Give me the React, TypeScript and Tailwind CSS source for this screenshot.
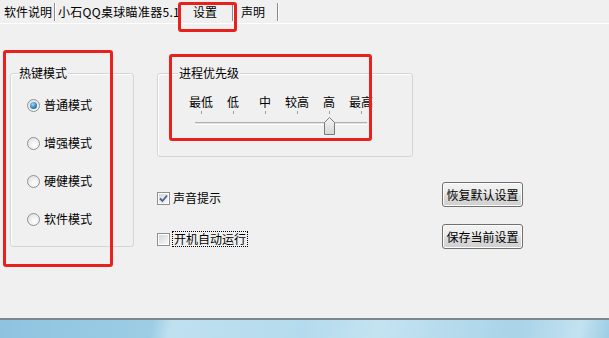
const FONT = "font-['Noto_Sans_CJK_SC','Noto_Sans',sans-serif]";

const HOTKEY_MODES = ["普通模式", "增强模式", "硬健模式", "软件模式"];
const PRIORITY_LABELS = ["最低", "低", "中", "较高", "高", "最高"];

function TabSep() {
  return <div className="w-[2px] h-[18px] border-l border-[#8a8a8a] border-r border-r-white shrink-0" />;
}

function Radio({ checked }: { checked: boolean }) {
  return (
    <div className="w-[13px] h-[13px] rounded-full border border-[#8f9192] bg-[radial-gradient(circle_at_60%_65%,#ffffff,#dcdcdc)] flex items-center justify-center shrink-0">
      {checked && (
        <div className="w-[7px] h-[7px] rounded-full bg-[radial-gradient(circle_at_40%_35%,#a8dcf5,#2a7ab8_60%,#0f4f85)]" />
      )}
    </div>
  );
}

function Checkbox({ checked }: { checked: boolean }) {
  return (
    <div className="w-[13px] h-[13px] border border-[#8f8f8f] bg-white p-[1px] shrink-0">
      <div className="w-full h-full bg-[linear-gradient(135deg,#d8d8d8,#f7f7f7)] flex items-center justify-center">
        {checked && (
          <svg width="9" height="9" viewBox="0 0 9 9">
            <path d="M1 4.5 L3.5 7 L8 1.5" fill="none" stroke="#4a5f97" strokeWidth="1.8" />
          </svg>
        )}
      </div>
    </div>
  );
}

function WinButton({ label }: { label: string }) {
  return (
    <button className="w-[81px] h-[25px] rounded-[3px] border border-[#707070] bg-[linear-gradient(#f3f3f3_0%,#ebebeb_48%,#dddddd_52%,#cfcfcf_100%)] shadow-[inset_0_0_0_1px_#fcfcfc] text-[12px] leading-none flex items-center justify-center">
      {label}
    </button>
  );
}

export default function App() {
  return (
    <div className={`relative w-[609px] h-[338px] overflow-hidden bg-[#f0f0f0] flex flex-col text-[12px] text-black ${FONT}`}>
      {/* Tabs */}
      <div className="h-[24px] flex items-center pl-[4px] border-b border-white shrink-0">
        <span className="leading-none">软件说明</span>
        <div className="ml-[2px]"><TabSep /></div>
        <span className="ml-[2px] w-[120px] leading-none whitespace-nowrap tracking-[0.3px]">小石QQ桌球瞄准器5.1</span>
        <div className="w-[54px] text-center leading-none">设置</div>
        <TabSep />
        <div className="w-[43px] pl-[7px] leading-none">声明</div>
        <TabSep />
      </div>

      {/* Content */}
      <div className="flex-1 flex items-start pl-[10px] pt-[49px]">
        {/* 热键模式 */}
        <div className="relative w-[124px] h-[174px] border border-[#d5d5d5] rounded-[3px] shadow-[inset_1px_1px_0_#fff] shrink-0">
          <span className="absolute left-[7px] -top-[8px] px-[1px] bg-[#f0f0f0] leading-[14px]">热键模式</span>
          <div className="flex flex-col gap-[22px] pl-[16px] pt-[23px]">
            {HOTKEY_MODES.map((m, i) => (
              <div key={m} className="h-[16px] flex items-center gap-[4px]">
                <Radio checked={i === 0} />
                <span className="leading-none">{m}</span>
              </div>
            ))}
          </div>
        </div>

        {/* right side */}
        <div className="ml-[23px] w-[366px] flex flex-col">
          <div className="relative w-[256px] h-[84px] border border-[#d5d5d5] rounded-[3px] shadow-[inset_1px_1px_0_#fff]">
            <span className="absolute left-[20px] -top-[8px] px-[1px] bg-[#f0f0f0] leading-[14px]">进程优先级</span>
            <div className="relative w-[192px] ml-[27px] mt-[21px]">
              <div className="flex">
                {PRIORITY_LABELS.map((l) => (
                  <div key={l} className="w-[32px] text-center leading-[14px] whitespace-nowrap">{l}</div>
                ))}
              </div>
              <div className="flex mt-[2px]">
                {PRIORITY_LABELS.map((l) => (
                  <div key={l} className="w-[32px] flex justify-center">
                    <div className="w-px h-[3px] bg-[#a0a0a0]" />
                  </div>
                ))}
              </div>
              <div className="ml-[10px] mt-[8px] w-[172px] h-[3px] border-t border-[#b0b0b0] border-b border-b-white bg-[#e3e3e3]" />
              <svg
                className="absolute left-[139px] top-[22px]"
                width="11"
                height="18"
                viewBox="0 0 11 18"
              >
                <defs>
                  <linearGradient id="thumb" x1="0" y1="0" x2="0" y2="1">
                    <stop offset="0" stopColor="#f6f6f6" />
                    <stop offset="1" stopColor="#d6d6d6" />
                  </linearGradient>
                </defs>
                <path d="M0.5 5.5 L5.5 0.5 L10.5 5.5 V17.5 H0.5 Z" fill="url(#thumb)" stroke="#7a7a7a" />
              </svg>
            </div>
          </div>

          <div className="flex justify-between">
            <div className="flex flex-col pt-[33px] gap-[25px]">
              <div className="h-[16px] flex items-center gap-[3px]">
                <Checkbox checked />
                <span className="leading-none">声音提示</span>
              </div>
              <div className="h-[16px] flex items-center gap-[2px]">
                <Checkbox checked={false} />
                <span className="leading-[14px] border border-dotted border-black px-[1px]">开机自动运行</span>
              </div>
            </div>
            <div className="flex flex-col pt-[25px] gap-[17px]">
              <WinButton label="恢复默认设置" />
              <WinButton label="保存当前设置" />
            </div>
          </div>
        </div>
      </div>

      {/* desktop strip below window */}
      <div className="h-[20px] shrink-0 border-t-2 border-[#7c888d] bg-[linear-gradient(100deg,#8ec3df_0%,#9dcde5_25%,#bfe0ef_28%,#b4dbed_50%,#c4e3f1_62%,#a9d3e8_85%,#c2e2f0_95%,#9fcde5_100%)]" />

      {/* red annotation boxes */}
      <div className="absolute left-[178px] top-[2px] w-[59px] h-[30px] border-[3px] border-[#e8211d] rounded-[3px]" />
      <div className="absolute left-[3px] top-[50px] w-[110px] h-[217px] border-[3px] border-[#e8211d] rounded-[3px]" />
      <div className="absolute left-[169px] top-[54px] w-[203px] h-[87px] border-[3px] border-[#e8211d] rounded-[3px]" />
    </div>
  );
}
